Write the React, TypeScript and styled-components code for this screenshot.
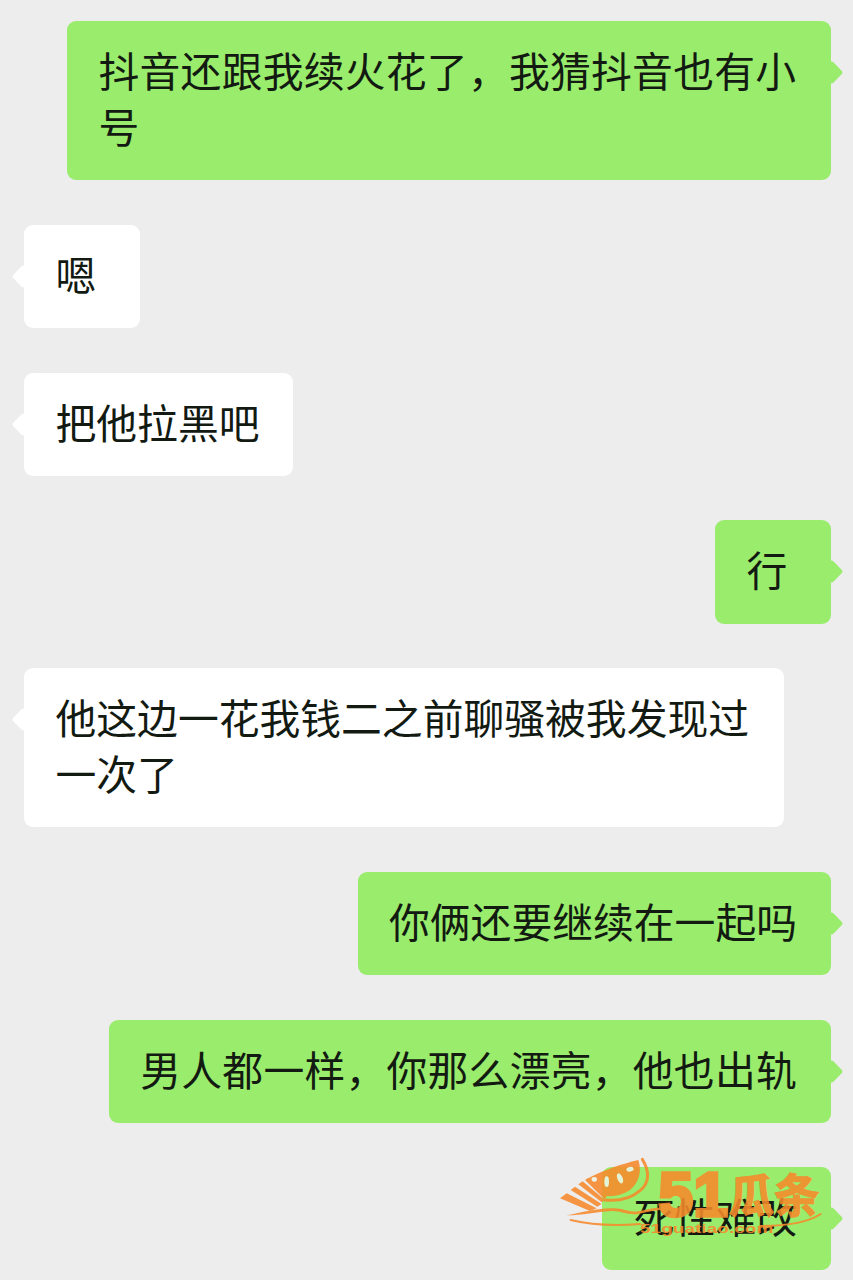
import React from "react";
import styled, { createGlobalStyle } from "styled-components";

const GlobalStyle = createGlobalStyle`
  html, body {
    margin: 0;
    padding: 0;
    background: #ededed;
  }
`;

const Page = styled.div`
  position: relative;
  width: 853px;
  height: 1280px;
  overflow: hidden;
  box-sizing: border-box;
  padding: 21.4px 22px 0 24px;
  display: flex;
  flex-direction: column;
  gap: 44.6px;
  background: #ededed;
  font-family: "Noto Sans CJK SC", "Noto Sans", sans-serif;
`;

const Row = styled.div<{ $mine?: boolean }>`
  display: flex;
  justify-content: ${(p) => (p.$mine ? "flex-end" : "flex-start")};
`;

const Bubble = styled.div<{ $mine?: boolean; $spaced?: boolean }>`
  position: relative;
  box-sizing: border-box;
  min-width: 116px;
  max-width: ${(p) => (p.$mine ? "764px" : "760px")};
  padding: 21px 34px 26.1px 31.5px;
  border-radius: 9px;
  font-size: 40.8px;
  line-height: 56px;
  letter-spacing: ${(p) => (p.$spaced ? "0.25px" : "0")};
  color: #121a12;
  background: ${(p) => (p.$mine ? "#9aec6c" : "#ffffff")};

  &::after {
    content: "";
    position: absolute;
    top: 43px;
    ${(p) => (p.$mine ? "right: -9px;" : "left: -9px;")}
    width: 17px;
    height: 17px;
    border-radius: 3px;
    transform: rotate(45deg);
    background: inherit;
  }
`;

const Watermark = styled.svg`
  position: absolute;
  right: 0;
  bottom: 0;
  width: 313px;
  height: 140px;
  opacity: 0.88;
  pointer-events: none;
`;

const WatermarkBig = styled.text`
  font-family: "Liberation Sans", sans-serif;
  font-size: 190px;
  font-weight: 700;
  fill: #f78a2c;
  stroke: #f78a2c;
  stroke-width: 10px;
`;

const WatermarkCjk = styled.text`
  font-family: "Noto Sans CJK SC", sans-serif;
  font-size: 138px;
  font-weight: 700;
  fill: #f78a2c;
  stroke: #f78a2c;
  stroke-width: 4px;
`;

const WatermarkUrl = styled.text`
  font-family: "Liberation Sans", sans-serif;
  font-size: 40px;
  font-weight: 700;
  fill: #f78a2c;
`;

const Logo = () => (
  <Watermark viewBox="0 0 939 420">
    {/* melon slice */}
    <path
      d="M145 115 C190 90 245 72 295 60 C305 90 300 125 270 150 C240 170 210 172 185 165 C172 145 155 130 145 115 Z"
      fill="#f78a2c"
    />
    <path
      d="M307 58 C330 95 328 130 300 152 C270 178 235 184 195 180"
      fill="none"
      stroke="#f78a2c"
      strokeWidth="9"
      strokeLinecap="round"
    />
    <ellipse cx="163" cy="118" rx="8" ry="7" fill="#eef4e6" />
    <ellipse cx="200" cy="125" rx="7" ry="16" fill="#eef4e6" />
    <ellipse cx="240" cy="115" rx="8" ry="16" fill="#eef4e6" transform="rotate(-22 240 115)" />
    <ellipse cx="270" cy="88" rx="11" ry="7" fill="#eef4e6" transform="rotate(-12 270 88)" />
    {/* tail */}
    <path d="M60 175 L80 160 L170 205 L150 213 Z" fill="#f78a2c" />
    <path d="M92 150 L105 140 L185 192 L172 200 Z" fill="#f78a2c" />
    <path d="M115 133 L128 124 L195 180 L185 187 Z" fill="#f78a2c" />
    <path d="M135 120 L145 113 L200 170 L193 177 Z" fill="#f78a2c" />
    {/* swoosh */}
    <path
      d="M80 226 C125 218 170 205 215 205 C250 203 265 218 295 214 C325 208 350 198 400 206 L400 212 C350 206 325 216 295 222 C260 226 245 212 215 213 C170 215 125 226 80 226 Z"
      fill="#f78a2c"
    />
    <path
      d="M92 240 C150 254 220 258 300 252"
      fill="none"
      stroke="#f78a2c"
      strokeWidth="6"
      strokeLinecap="round"
    />
    <path
      d="M660 258 C730 258 800 250 842 222"
      fill="none"
      stroke="#f78a2c"
      strokeWidth="6"
      strokeLinecap="round"
    />
    <WatermarkBig x="355" y="228" textLength="210" lengthAdjust="spacingAndGlyphs">
      51
    </WatermarkBig>
    <WatermarkCjk x="566" y="216" textLength="272" lengthAdjust="spacingAndGlyphs">
      瓜条
    </WatermarkCjk>
    <WatermarkUrl x="300" y="278" textLength="400" lengthAdjust="spacingAndGlyphs">
      51guatiao.com
    </WatermarkUrl>
  </Watermark>
);

const messages: { text: string; mine?: boolean }[] = [
  { text: "抖音还跟我续火花了，我猜抖音也有小号", mine: true },
  { text: "嗯" },
  { text: "把他拉黑吧" },
  { text: "行", mine: true },
  { text: "他这边一花我钱二之前聊骚被我发现过一次了" },
  { text: "你俩还要继续在一起吗", mine: true },
  { text: "男人都一样，你那么漂亮，他也出轨", mine: true },
  { text: "死性难改", mine: true },
];

const App = () => {
  return (
    <Page>
      <GlobalStyle />
      {messages.map((m) => (
        <Row key={m.text} $mine={m.mine}>
          <Bubble $mine={m.mine} $spaced={m.text.includes("，")}>
            {m.text}
          </Bubble>
        </Row>
      ))}
      <Logo />
    </Page>
  );
};

export default App;
